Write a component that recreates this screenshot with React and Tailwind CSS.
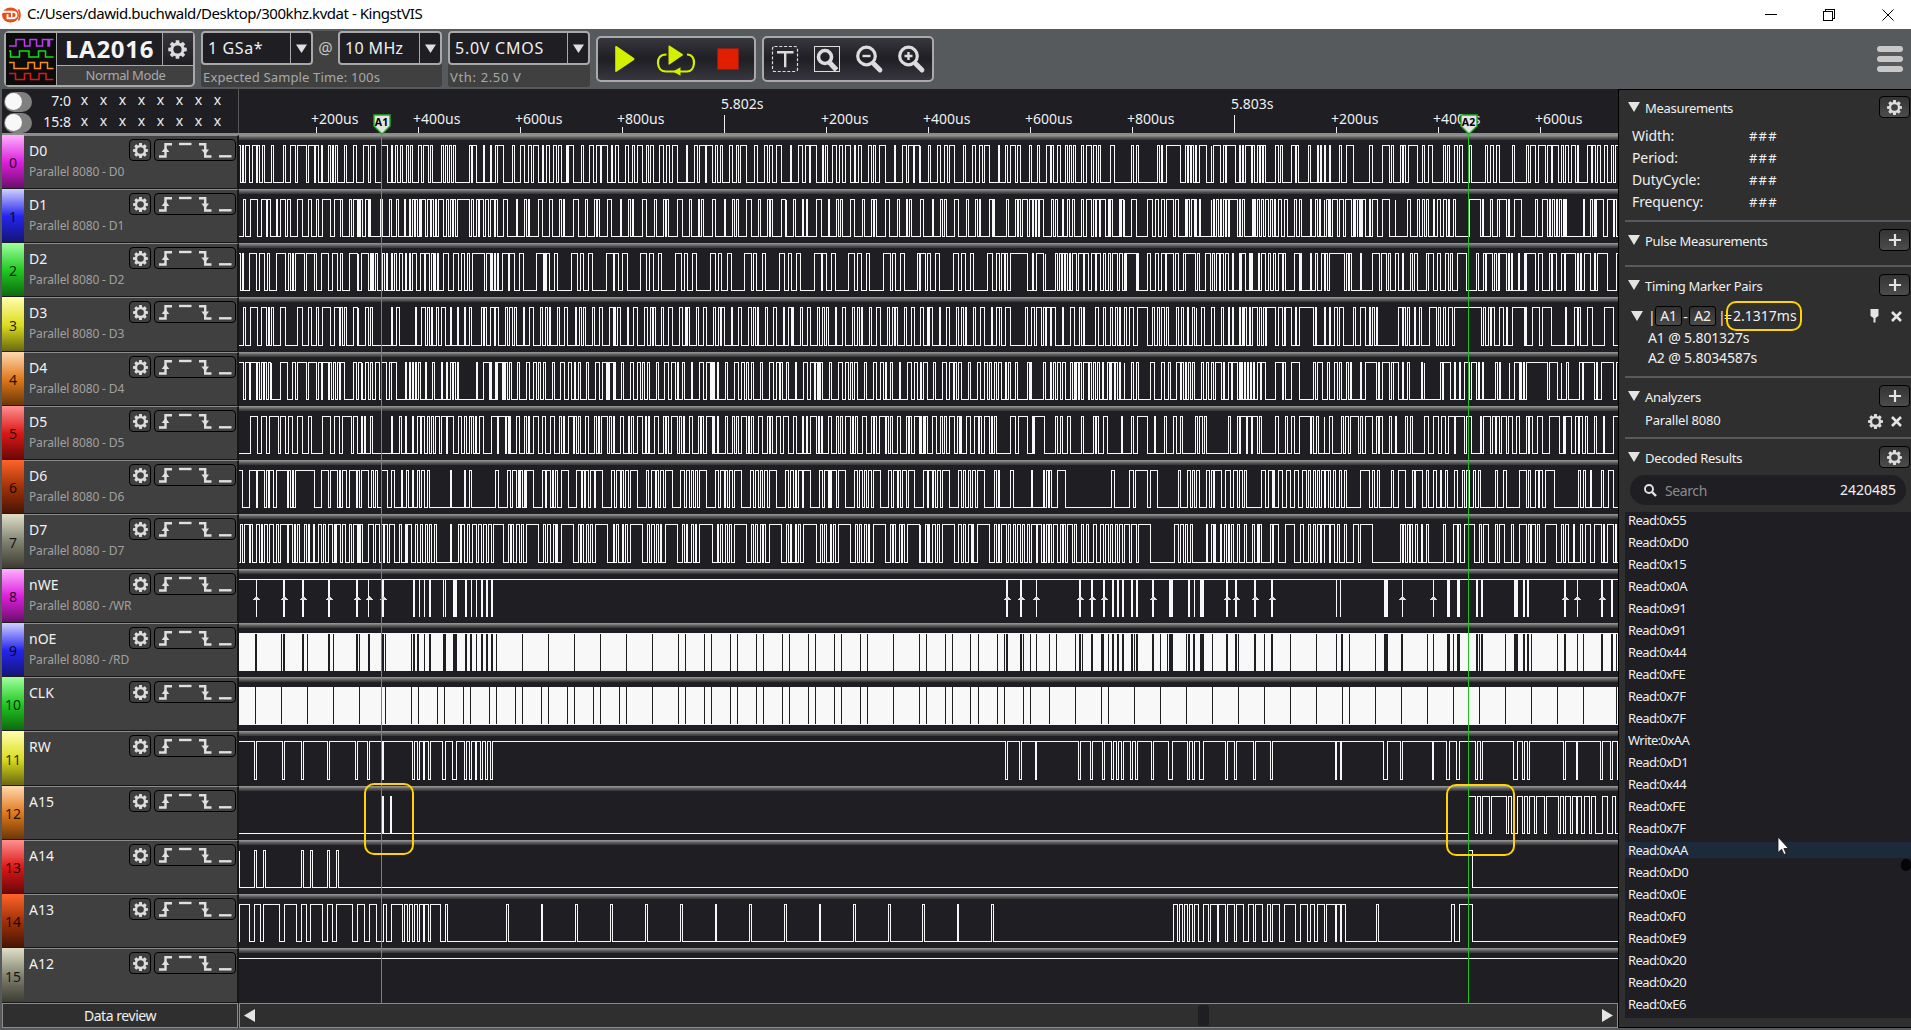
import React from "react";

const WAVE_X = 239;
const WAVE_W = 1379;

/* Edge positions of each captured block: pixel = origin + edge / scale */
const A = { origin: 230, scale: 2.2725 };
const B = { origin: 920, scale: 2.24 };
const C = { origin: 0, scale: 2.45 };
const P = { origin: 0, scale: 1 };

const nums = (s) => s.trim().split(/\s+/).map(Number);
const px = (v, block) => Math.floor(block.origin + v / block.scale - WAVE_X);

const STRIP = [
  "bg-[linear-gradient(180deg,#ffb0ff_0%,#dc1edc_52%,#6a0f6a_100%)]",
  "bg-[linear-gradient(180deg,#d0d0ff_0%,#2424ee_52%,#141478_100%)]",
  "bg-[linear-gradient(180deg,#a0ffa0_0%,#20c820_52%,#0d6a0d_100%)]",
  "bg-[linear-gradient(180deg,#ffffb0_0%,#dcdc1e_52%,#6a6a10_100%)]",
  "bg-[linear-gradient(180deg,#ffd8b0_0%,#e07818_52%,#6a3808_100%)]",
  "bg-[linear-gradient(180deg,#ff9090_0%,#dc1616_52%,#6a0808_100%)]",
  "bg-[linear-gradient(180deg,#ff6428_0%,#a03008_52%,#481604_100%)]",
  "bg-[linear-gradient(180deg,#e0e0c8_0%,#808070_52%,#3c3c30_100%)]",
];

const CHANNELS = [
  { name: "D0", sub: "D0", h: 54, blocks: [
    [A, "20 24 28 31 35 45 51 60 62 68 74 79 94 99 121 126 137 149 153 174 178 191 195 200 207 211 223 228 232 235 239 244 260 265 280 288 303 315 319 331 345 357 367 370 375 381 387 392 401 406 410 415 428 435 439 451 456 460 480 485 490 495 499 503 508 513 544 549 551 560 575 579 591 594 603 607 609 621 642 647 661 669 678 685 689 701 710 713 719 726 736 742 747 754 764 768 769 781 798 803 818 827 834 841 845 857 866 870 875 882 898 905 914 919 925 937 946 950 955 962 976 984 991 998 1005 1017 1037 1040 1055 1062 1068 1080 1082 1097 1103 1108 1114 1119 1134 1142 1150 1155 1161 1173 1193 1198 1214 1222 1227 1232 1241 1253 1273 1276 1292 1300 1307 1317 1319 1333 1346 1349 1353 1357 1370 1378 1386 1391 1398 1410 1419 1422 1429 1434 1450 1457 1462 1466 1477 1489 1510 1513 1528 1537 1543 1553 1556 1567"],
    [B, "0 2 20 24 39 45 55 61 66 77 97 101 117 124 133 140 144 156 176 178 191 195 203 214 219 225 246 250 263 268 283 292 294 299 309 314 325 330 335 339 343 348 361 367 373 384 389 395 399 404 427 435 474 478 484 489 532 537 541 543 552 583 595 599 602 605 609 613 617 620 625 642 652 654 657 674 680 684 686 707 716 719 722 725 728 742 745 749 757 760 763 768 770 775 796 802 808 811 832 840 844 848 870 875 890 893 897 900 906 908 917 920 939 944 956 971 1007 1013 1036 1051 1056 1061 1076 1080 1082 1088 1094 1115 1125 1130 1139 1149 1173 1177 1181 1187 1198 1203 1209 1215 1230 1235 1267 1272 1277 1284 1292 1297 1327 1332 1358 1363 1367 1379 1385 1401 1405 1414 1416 1431 1437 1442 1447 1452 1459 1468 1473 1475 1496 1504 1507 1514 1517 1525 1533 1541 1549 1553 1559 1564"],
  ] },
  { name: "D1", sub: "D1", h: 54, blocks: [
    [A, "31 35 46 63 72 82 86 91 105 109 114 126 131 137 153 165 178 185 196 200 211 228 237 250 251 256 271 275 280 289 291 294 297 302 307 315 318 320 341 346 363 367 378 384 396 399 409 411 415 419 422 427 430 434 436 444 449 456 458 463 468 470 474 485 492 497 501 505 509 513 516 544 549 553 560 564 568 577 580 588 591 600 603 607 621 631 651 653 669 674 679 681 701 711 727 733 749 754 757 760 780 792 808 813 829 832 836 840 858 868 887 890 905 909 914 916 937 947 964 969 985 989 991 997 1017 1028 1044 1049 1065 1068 1072 1076 1096 1104 1124 1126 1142 1147 1152 1156 1173 1185 1202 1206 1221 1226 1229 1232 1253 1262 1264 1265 1280 1286 1300 1304 1309 1312 1332 1344 1360 1362 1378 1383 1387 1391 1410 1420 1437 1442 1458 1463 1465 1469 1489 1498 1516 1521 1537 1540 1545 1549"],
    [B, "0 8 28 30 47 50 55 59 77 86 104 109 125 129 133 136 156 162 165 167 193 198 214 218 220 225 229 241 246 251 254 258 261 265 268 277 294 299 304 309 319 321 330 335 341 346 361 366 372 384 388 393 396 401 404 416 422 425 427 431 447 449 452 455 457 459 474 485 509 520 527 534 541 547 552 568 573 578 595 597 600 603 609 614 618 620 626 628 652 654 657 659 664 668 673 675 680 684 686 692 694 711 716 718 722 726 744 746 749 752 757 760 765 770 775 781 786 790 795 797 803 809 816 824 839 843 850 855 875 877 885 890 894 898 905 907 911 914 918 920 924 935 940 949 954 967 970 974 976 979 981 984 987 989 992 998 1007 1010 1013 1025 1036 1051 1064 1066 1092 1099 1115 1118 1125 1130 1134 1139 1150 1153 1160 1166 1173 1179 1184 1187 1195 1200 1230 1256 1261 1262 1278 1283 1293 1297 1299 1314 1319 1321 1331 1347 1378 1383 1394 1405 1409 1413 1416 1422 1425 1429 1433 1438 1441 1443 1447 1448 1487 1489 1501 1506 1510 1513 1516 1532 1541 1553 1556 1561"],
  ] },
  { name: "D2", sub: "D2", h: 54, blocks: [
    [A, "20 24 28 31 44 60 67 79 86 90 105 126 132 137 141 145 148 169 174 192 193 196 208 224 233 244 250 256 271 289 291 293 298 315 319 321 323 327 331 336 346 351 356 358 366 370 374 379 385 393 398 402 409 411 415 424 433 442 445 453 458 462 465 468 471 474 485 497 508 519 527 533 540 544 551 578 583 591 594 597 600 603 607 611 619 634 636 646 658 667 697 712 715 717 719 726 738 744 776 789 796 803 815 824 855 871 874 882 893 903 933 946 953 962 974 981 1012 1027 1033 1040 1051 1060 1092 1104 1110 1118 1130 1140 1169 1184 1190 1197 1210 1217 1249 1261 1269 1276 1287 1297 1328 1344 1347 1356 1367 1376 1405 1420 1426 1434 1446 1453 1485 1501 1505 1512 1524 1533 1563 1567"],
    [B, "0 12 17 24 35 44 76 86 94 102 113 120 151 162 171 178 183 190 192 197 203 241 251 255 262 277 282 282 303 308 313 317 320 323 326 330 334 338 341 351 356 366 368 377 384 393 396 404 411 416 422 427 431 443 447 453 458 461 462 484 488 489 509 516 527 534 540 549 552 568 572 578 590 594 595 617 621 626 640 651 656 660 665 670 674 679 685 690 699 702 716 718 721 729 738 740 743 745 758 761 765 775 781 786 791 797 803 811 815 818 839 849 852 855 875 878 886 890 900 905 909 913 917 950 955 960 962 967 986 988 1013 1029 1034 1045 1049 1055 1065 1071 1081 1083 1099 1104 1108 1115 1135 1138 1140 1151 1160 1167 1177 1183 1188 1193 1203 1224 1246 1250 1262 1267 1268 1282 1286 1292 1295 1297 1299 1314 1319 1321 1325 1327 1341 1343 1353 1356 1358 1379 1385 1394 1410 1414 1416 1425 1437 1443 1447 1468 1473 1475 1479 1482 1488 1501 1510 1514 1517 1541 1561 1564"],
  ] },
  { name: "D3", sub: "D3", h: 55, blocks: [
    [A, "31 35 46 63 71 82 87 90 94 99 115 126 153 165 178 185 196 200 211 228 237 249 252 256 260 265 280 289 291 293 307 315 319 324 366 369 378 385 421 423 436 444 449 453 458 460 469 474 480 489 501 503 517 519 533 536 544 549 571 575 578 582 591 600 603 610 625 631 635 642 646 652 667 670 681 690 705 710 717 721 725 728 744 749 760 768 785 788 795 798 803 808 824 829 839 847 862 871 874 876 881 887 903 906 917 925 941 949 955 960 962 966 980 986 996 1005 1021 1028 1034 1037 1039 1044 1060 1065 1076 1083 1098 1103 1110 1114 1118 1124 1139 1143 1155 1163 1178 1185 1189 1194 1198 1202 1216 1222 1234 1243 1257 1260 1270 1276 1278 1281 1296 1301 1312 1319 1334 1340 1346 1350 1355 1360 1375 1378 1391 1399 1414 1420 1426 1430 1434 1437 1453 1458 1469 1478 1494 1498 1505 1509 1512 1516 1532 1538 1549 1556"],
    [B, "2 7 16 18 22 27 44 46 59 66 82 87 92 97 101 104 120 124 135 145 160 162 171 177 179 182 192 203 236 240 250 257 262 272 277 282 283 292 294 303 319 321 337 346 357 362 367 369 393 399 411 416 427 431 437 443 447 449 458 462 470 478 488 509 520 525 532 537 541 547 552 557 574 578 586 590 599 602 610 615 619 620 630 637 653 659 675 680 690 694 699 703 715 718 722 724 727 732 737 740 744 757 760 765 770 775 776 796 803 812 816 818 819 832 840 844 850 882 886 888 905 909 917 920 928 935 939 949 971 976 987 998 1007 1010 1014 1018 1022 1025 1072 1080 1082 1087 1093 1097 1108 1110 1119 1123 1141 1157 1161 1167 1173 1177 1184 1192 1197 1258 1262 1267 1273 1277 1281 1286 1298 1308 1314 1316 1327 1353 1356 1358 1372 1388 1394 1414 1447 1448 1467 1473 1475 1480 1495 1507 1533 1553"],
  ] },
  { name: "D4", sub: "D4", h: 54, blocks: [
    [A, "20 31 35 44 47 60 62 67 71 76 79 83 87 91 94 95 115 131 142 149 153 174 178 196 200 208 211 224 227 231 235 240 244 248 250 260 280 288 291 298 300 301 307 315 319 323 331 340 344 344 345 356 363 366 367 379 398 400 409 411 415 418 421 424 428 432 444 446 460 465 480 482 491 495 500 505 509 513 517 519 560 563 577 589 592 594 603 606 609 619 621 623 626 631 635 639 653 658 674 681 689 696 701 705 713 717 733 738 752 760 769 776 782 785 791 796 811 815 831 840 847 855 858 860 863 871 874 876 890 894 910 917 926 933 937 942 949 953 969 974 988 997 1004 1012 1016 1019 1029 1033 1048 1051 1067 1076 1083 1092 1094 1097 1099 1101 1107 1111 1126 1130 1146 1155 1163 1169 1173 1178 1185 1189 1205 1210 1226 1234 1241 1248 1252 1256 1265 1269 1284 1287 1303 1312 1319 1328 1331 1335 1337 1340 1343 1347 1363 1367 1383 1391 1399 1405 1409 1414 1420 1426 1442 1446 1462 1469 1478 1485 1489 1493 1501 1505 1521 1524 1540 1549 1555 1563"],
    [B, "0 3 8 17 30 35 51 59 66 75 77 82 87 93 109 113 128 136 145 151 156 160 167 171 176 182 191 194 198 203 213 219 241 245 247 250 277 280 292 295 299 303 309 315 319 325 337 341 346 349 351 355 357 361 366 377 380 384 389 394 398 403 408 411 421 424 425 426 428 436 438 443 446 448 457 459 474 479 484 489 516 525 541 548 557 562 574 583 586 590 594 597 601 605 610 615 631 636 642 646 652 657 663 675 679 683 690 698 700 711 715 718 721 723 727 730 734 736 740 743 747 749 757 762 764 775 796 811 815 818 832 849 881 886 891 901 912 917 928 935 940 945 955 960 964 967 986 988 998 1022 1026 1030 1036 1051 1056 1060 1061 1072 1081 1083 1092 1096 1124 1126 1130 1131 1167 1170 1173 1188 1197 1200 1208 1211 1219 1230 1235 1246 1250 1254 1261 1262 1289 1293 1298 1301 1320 1321 1331 1342 1345 1348 1351 1355 1358 1405 1410 1427 1437 1438 1448 1453 1478 1483 1486 1511 1515 1518 1526 1553 1560 1564"],
  ] },
  { name: "D5", sub: "D5", h: 54, blocks: [
    [A, "46 62 71 83 90 110 115 126 132 142 153 165 178 185 211 228 237 249 256 276 280 289 298 302 305 309 319 324 366 369 385 390 398 401 415 417 426 432 436 442 449 453 458 463 466 476 480 492 495 508 519 527 533 537 544 548 549 553 558 560 568 576 594 607 610 626 628 632 635 637 651 658 670 674 679 681 689 701 710 717 728 738 749 754 757 760 769 781 784 788 792 796 808 815 829 832 838 840 845 858 863 866 871 874 887 894 905 908 913 917 925 938 944 946 950 953 965 974 985 989 991 996 1004 1016 1021 1026 1030 1033 1044 1051 1065 1069 1072 1075 1083 1096 1098 1101 1107 1110 1126 1130 1143 1147 1152 1155 1162 1174 1178 1181 1186 1189 1202 1210 1222 1226 1229 1232 1241 1252 1257 1269 1280 1287 1301 1304 1309 1312 1319 1333 1337 1340 1344 1347 1360 1367 1378 1383 1387 1391 1398 1410 1414 1417 1422 1426 1438 1446 1458 1462 1465 1469 1477 1489 1493 1497 1501 1505 1516 1524 1537 1541 1545 1549 1556 1567"],
    [B, "0 3 7 10 13 17 28 36 45 50 55 59 66 77 84 88 90 93 104 113 123 130 133 137 144 156 160 163 167 171 203 214 220 241 251 255 256 279 303 308 315 320 330 337 361 366 389 393 395 400 411 419 451 453 474 479 488 509 525 527 547 552 568 575 583 587 617 621 627 632 638 642 691 696 711 716 719 731 734 742 745 757 760 765 796 803 818 823 832 839 850 875 877 882 889 893 905 907 917 923 944 949 954 959 965 983 987 991 998 1013 1022 1026 1030 1036 1051 1056 1065 1067 1088 1092 1099 1103 1131 1139 1151 1161 1168 1176 1183 1197 1199 1219 1224 1235 1256 1258 1262 1278 1282 1288 1292 1298 1302 1314 1319 1327 1336 1342 1358 1362 1366 1371 1383 1395 1410 1433 1441 1443 1447 1459 1468 1474 1477 1483 1490 1495 1510 1515 1531 1533 1553 1564"],
  ] },
  { name: "D6", sub: "D6", h: 54, blocks: [
    [A, "20 28 44 60 63 78 83 87 90 99 105 131 133 137 141 145 149 191 208 224 228 244 249 252 256 265 271 287 290 295 298 315 322 325 331 335 345 358 367 374 389 393 401 406 415 418 426 431 436 442 449 453 501 503 533 536 544 549 603 610 630 637 641 652 656 658 661 665 669 672 674 690 710 716 720 728 733 736 740 745 753 769 787 798 800 805 808 815 819 828 830 847 867 873 878 888 890 894 899 905 909 926 946 952 957 966 970 974 979 985 990 1005 1024 1033 1037 1045 1048 1053 1057 1063 1066 1083 1104 1110 1114 1123 1126 1130 1136 1143 1147 1163 1182 1189 1194 1202 1205 1210 1214 1222 1226 1241 1263 1269 1273 1281 1284 1288 1293 1300 1303 1319 1340 1346 1350 1359 1362 1364 1368 1378 1383 1399 1419 1426 1430 1437 1442 1446 1450 1458 1462 1478 1496 1504 1508 1516 1520 1523 1528 1537 1541 1556"],
    [B, "8 17 19 28 30 35 39 45 50 66 86 92 97 103 109 113 117 124 129 145 167 171 176 178 203 210 250 252 277 279 283 287 291 295 308 326 430 435 469 478 483 509 516 532 579 583 599 606 610 615 620 626 642 648 652 658 660 675 684 696 702 711 716 722 727 731 765 775 781 789 791 795 803 811 822 831 839 848 857 865 870 875 881 886 890 894 899 905 909 914 916 920 926 931 939 944 951 955 986 1007 1013 1018 1025 1029 1056 1061 1072 1088 1103 1108 1110 1125 1135 1139 1151 1156 1166 1168 1176 1182 1198 1203 1215 1219 1224 1231 1240 1245 1250 1256 1288 1293 1308 1314 1342 1358 1363 1367 1379 1386 1388 1394 1401 1421 1475 1479 1487 1491 1501 1505 1526 1532 1542 1553"],
  ] },
  { name: "D7", sub: "D7", h: 55, blocks: [
    [A, "24 28 34 44 46 51 60 67 71 74 78 86 90 99 105 110 115 131 133 142 146 149 153 158 169 174 179 181 190 193 200 208 212 216 223 233 237 239 243 250 256 263 271 275 280 289 291 294 297 302 315 325 330 340 345 348 352 358 362 374 385 389 398 401 404 413 422 427 433 438 444 449 453 458 465 469 501 503 519 524 527 533 540 544 551 560 564 572 576 582 587 594 599 621 634 637 640 645 652 658 662 667 674 701 712 717 722 728 736 739 742 744 753 780 792 796 798 803 811 815 819 824 831 858 871 874 878 882 891 895 899 903 910 937 949 953 958 964 970 974 978 981 990 1017 1028 1033 1037 1040 1049 1053 1058 1060 1067 1096 1107 1110 1115 1119 1127 1131 1135 1139 1146 1174 1185 1189 1194 1198 1206 1210 1213 1217 1226 1253 1264 1269 1273 1277 1284 1288 1292 1296 1303 1332 1343 1347 1351 1356 1364 1367 1371 1375 1383 1410 1421 1425 1430 1434 1441 1446 1450 1453 1462 1489 1501 1505 1508 1512 1521 1525 1529 1533 1540 1567"],
    [B, "0 2 12 17 18 22 29 34 39 43 50 77 87 92 97 101 109 115 117 119 129 156 167 171 176 178 182 193 198 203 209 214 219 224 229 235 241 246 250 261 263 272 277 279 283 287 291 295 298 308 315 320 322 325 330 341 346 350 362 367 373 377 388 395 404 411 416 422 427 431 437 443 447 453 458 469 474 484 489 516 570 578 583 590 595 599 606 611 642 644 652 657 660 663 673 675 681 686 691 694 698 702 711 715 727 731 744 750 757 759 761 765 785 789 791 802 819 839 853 859 870 875 881 885 890 896 900 905 907 917 920 928 935 940 950 955 971 982 987 1013 1076 1080 1082 1087 1092 1096 1099 1103 1110 1114 1123 1125 1134 1138 1173 1177 1196 1203 1207 1211 1219 1242 1254 1258 1262 1274 1289 1293 1297 1309 1325 1330 1342 1358 1362 1367 1370 1379 1383 1388 1400 1426 1437 1441 1447 1452 1463 1467 1479 1485 1490 1501 1511 1527 1531 1533 1541 1553 1557 1560"],
  ] },
  { name: "nWE", sub: "/WR", h: 54, kind: "strobe",
    /* x width pairs */
    blocks: [
      [C, "628 1 695 2 742 2 806 2 875 2 904 1 938 2 1014 2 1028 1 1040 1 1053 2 1087 1 1092 1 1115 4 1141 2 1155 1 1167 1 1180 2 1193 2 1205 2"],
      [B, "195 2 226 2 261 1 359 2 386 2 412 2 433 2 444 2 454 2 475 2 486 2 522 2 562 4 602 2 615 1 631 4 687 2 708 2 750 2 789 2 933 1 943 1 1043 4 1081 1 1150 1 1183 3 1206 3 1247 2 1259 2 1335 4 1353 2 1363 2 1445 2 1473 1 1528 2 1550 2"],
    ],
    arrows: [
      [C, "628 697 743 807 875 906 940"],
      [B, "196 227 261 360 386 413 523 689 708 751 789 1081 1150 1446 1473 1528"],
    ] },
  { name: "nOE", sub: "/RD", h: 54, kind: "dense", top: 11, bottom: 48,
    blocks: [
      [C, "627 2 689 1 695 2 742 2 753 1 806 2 817 1 874 2 881 1 904 2 939 2 944 1 1008 1 1014 2 1025 2 1040 1 1053 2 1089 3 1115 4 1141 2 1153 2 1167 1 1180 2 1192 2 1205 2 1216 1 1280 1 1344 1 1407 1"],
      [P, "600 1 626 1 652 1 678 1 685 1 704 1 711 1 730 1 737 1 756 1 763 1 782 1 789 1 808 1 815 1 834 1 841 1 860 1 867 1 893 1 919 1"],
      [B, "14 1 56 1 72 1 114 1 130 1 173 1 189 1 195 2 226 2 231 1 247 1 261 1 290 1 306 1 348 1 358 2 364 1 385 2 406 1 411 2 422 1 433 2 444 2 454 2 475 2 480 1 486 2 522 2 539 1 555 1 562 4 597 1 602 2 614 2 631 4 655 1 687 2 708 2 713 1 750 2 772 1 789 2 830 1 888 1 933 1 946 2 962 1 1020 1 1043 4 1079 2 1137 1 1150 1 1183 3 1195 1 1206 3 1247 2 1253 1 1259 2 1311 1 1335 4 1353 2 1363 2 1370 1 1428 1 1445 2 1473 1 1486 1 1527 2 1549 2 1560 1"],
    ] },
  { name: "CLK", h: 54, kind: "dense", top: 10, bottom: 47,
    blocks: [
      [C, "626 1 689 1 753 1 817 1 881 1 944 1 1008 1 1025 1 1072 1 1089 1 1135 1 1153 1 1199 1 1216 1 1263 1 1280 1 1327 1 1344 1 1390 1 1407 1 1454 1"],
      [P, "600 1 619 1 626 1 652 1 678 1 685 1 704 1 711 1 730 1 737 1 756 1 763 1 782 1 789 1 808 1 815 1 834 1 841 1 860 1 867 1 893 1 919 1"],
      [B, "14 1 56 1 72 1 114 1 130 1 173 1 189 1 231 1 247 1 290 1 348 1 406 1 422 1 480 1 539 1 597 1 655 1 713 1 772 1 830 1 888 1 946 1 962 1 1020 1 1078 1 1137 1 1195 1 1253 1 1311 1 1370 1 1428 1 1486 1 1560 1"],
    ] },
  { name: "RW", h: 55, idleHigh: true, blocks: [
    [C, "624 628 692 697 739 744 803 807 871 876 901 905 936 940 1011 1015 1023 1028 1037 1040 1050 1055 1085 1091 1108 1119 1138 1143 1150 1155 1164 1168 1177 1182 1189 1194 1202 1207"],
    [B, "191 196 223 227 259 261 356 360 382 387 409 413 430 434 440 445 451 456 471 476 483 487 518 522 557 566 600 604 610 614 626 635 684 689 704 709 748 752 785 790 931 933 942 944 1038 1047 1076 1081 1148 1150 1179 1186 1202 1209 1244 1249 1256 1260 1330 1338 1349 1353 1361 1365 1441 1446 1470 1473 1524 1529 1547 1551 1562 1564"],
  ] },
  { name: "A15", h: 54, blocks: [
    [C, "936 940 956 959"],
    [B, "1229 1244 1249 1255 1260 1276 1280 1314 1318 1325 1338 1350 1353 1361 1365 1376 1381 1399 1403 1430 1435 1441 1446 1457 1461 1470 1473 1482 1488 1500 1504 1513 1529 1540 1551 1558"],
  ] },
  { name: "A14", h: 54, blocks: [
    [C, "586 588 624 628 645 650 739 744 760 766 803 807 824 830"],
    [B, "1229 1238"],
  ] },
  { name: "A13", h: 54, blocks: [
    [C, "586 611 624 638 645 685 697 726 739 751 760 790 803 814 824 863 876 893 905 922 940 947 959 986 991 998 1003 1010 1015 1023 1028 1037 1040 1050 1055 1079 1091 1097 1241 1246 1326 1329 1410 1415 1495 1501"],
    [P, "645 647 680 682 715 716 749 751 784 786 819 820 853 855 888 890"],
    [B, "5 10 84 86 160 165 568 577 581 588 592 599 603 610 614 624 635 646 651 666 669 684 689 704 709 725 736 747 752 767 779 785 790 805 816 841 852 868 875 884 890 907 910 931 933 942 944 953 1022 1027 1190 1197 1208 1238"],
  ] },
  { name: "A12", h: 55, idleHigh: true, blocks: [] },
];

function levelPath(ch) {
  const hi = 10.5;
  const lo = ch.h - 6.5;
  const base = ch.idleHigh ? hi : lo;
  const peak = ch.idleHigh ? lo : hi;
  let d = `M0 ${base}`;
  ch.blocks.forEach(([block, s]) => {
    const e = nums(s);
    for (let i = 0; i < e.length; i += 2) {
      const a = px(e[i], block) + 0.5;
      const b = px(e[i + 1], block) + 0.5;
      d += `H${a}V${peak}H${b}V${base}`;
    }
  });
  return d + `H${WAVE_W}`;
}

function bars(blocks) {
  const out = [];
  blocks.forEach(([block, s]) => {
    const e = nums(s);
    for (let i = 0; i < e.length; i += 2) {
      const w = e[i + 1];
      out.push([Math.round(block.origin + e[i] / block.scale - WAVE_X - (block === P ? 0 : w / 2)), w]);
    }
  });
  return out;
}

function Wave({ ch }) {
  return (
    <svg width={WAVE_W} height={ch.h} className="block" shapeRendering="crispEdges">
      {ch.kind === "dense" && (
        <>
          <rect x="0" y="10" width={WAVE_W} height="38" fill="#f8f8f8" />
          {bars(ch.blocks).map(([x, w], i) => (
            <rect key={i} x={x} y={ch.top} width={w} height={ch.bottom - ch.top} fill="#1f1e23" />
          ))}
        </>
      )}
      {ch.kind === "strobe" && (
        <>
          <rect x="0" y="10" width={WAVE_W} height="1" fill="#f8f8f8" />
          {bars(ch.blocks).map(([x, w], i) => (
            <rect key={i} x={x} y="10" width={w} height="38" fill="#f8f8f8" />
          ))}
          {ch.arrows.flatMap(([block, s]) =>
            nums(s).map((v) => {
              const x = px(v, block) + 0.5;
              return <path key={x} d={`M${x} 27l3.5 4h-7z`} fill="#e0e0e0" />;
            })
          )}
        </>
      )}
      {!ch.kind && <path d={levelPath(ch)} fill="none" stroke="#f8f8f8" />}
    </svg>
  );
}

function Gear({ className, hole = "#3f3f3f" }) {
  return (
    <svg viewBox="0 0 20 20" className={className} fill="#dcdcdc">
      {[0, 45, 90, 135, 180, 225, 270, 315].map((a) => (
        <path key={a} d="M8.4 1.2h3.2l.5 4h-4.2z" transform={`rotate(${a} 10 10)`} />
      ))}
      <circle cx="10" cy="10" r="6.6" />
      <circle cx="10" cy="10" r="3.9" fill={hole} />
    </svg>
  );
}

function EdgeIcons() {
  return (
    <svg width="80" height="20" viewBox="155 140 80 20" className="block" fill="none" stroke="#e0e0e0" strokeWidth="2.4">
      <path d="M159 156.500h6.500v-12.300h6.500" />
      <path d="M165.500 147l3.800 5h-7.600z" fill="#e0e0e0" stroke="none" />
      <path d="M179 144h12.500" />
      <path d="M199 144.200h6.200v12.300h6.300" />
      <path d="M205.200 154.500l3.800-5h-7.600z" fill="#e0e0e0" stroke="none" />
      <path d="M219 156.300h12.500" />
    </svg>
  );
}

function ChannelRow({ ch, index }) {
  return (
    <div className={"flex " + (ch.h === 55 ? "h-[55px]" : "h-[54px]")}>
      <div className={"flex w-[22px] shrink-0 items-center justify-center border-b border-[#1c1c1e] pt-[2px] text-[14px] text-black/85 " + STRIP[index % 8]}>
        {index}
      </div>
      <div className="flex w-[215px] shrink-0 justify-between border-t border-r-2 border-b border-t-[#8c8c8c] border-r-[#161616] border-b-[#161616] bg-[#404040] pl-[5px] pr-px">
        <div className="flex flex-col pt-[5px]">
          <span className="h-5 text-[14px] leading-5 text-[#f2f2f2]">{ch.name}</span>
          {ch.sub && <span className="mt-[3px] text-[12px] leading-4 tracking-[-0.15px] whitespace-nowrap text-[#a0a0a0]">Parallel 8080 - {ch.sub}</span>}
        </div>
        <div className="absolute ml-[100px] mt-[3px] flex gap-[3px]">
          <div className="flex h-[22px] w-[22px] items-center justify-center rounded-[4px] border border-black">
            <Gear className="h-[17px] w-[17px]" />
          </div>
          <div className="flex h-[22px] w-[82px] items-center rounded-[4px] border border-black">
            <EdgeIcons />
          </div>
        </div>
      </div>
      <div className="grow bg-[#1f1e23] bg-[linear-gradient(180deg,#979797_0,#8a8a8a_1px,#6c6c6c_2px,#555_3px,#333336_5px,#1f1e23_5px)]">
        <Wave ch={ch} />
      </div>
    </div>
  );
}

function Combo({ text, box, inner, track }) {
  return (
    <div className={"flex h-[34px] rounded-[4px] border-2 border-[#a9a9a9] bg-[#1f1e23] " + box}>
      <span className={"grow pl-[5px] text-[16px] leading-[31px] whitespace-nowrap text-[#f0f0f0] " + track}>{text}</span>
      <div className={"flex items-center justify-center border-l border-[#a9a9a9] " + inner}>
        <svg width="11" height="9" className="block"><path d="M0 .5h11l-5.500 8.500z" fill="#e0e0e0" /></svg>
      </div>
    </div>
  );
}

function Toolbar() {
  return (
    <div className="flex h-[60px] items-start bg-[#575a5d] pt-[2px] pl-1">
      <div className="flex h-[56px] w-[191px] rounded-[5px] border-2 border-[#a9a9a9] bg-[#404040]">
        <svg width="50" height="52" viewBox="6 33 50 52" className="block shrink-0 bg-[#0c0c0c]" fill="none" strokeWidth="1.500">
          <path stroke="#b83cf0" d="M9 46h7v-6.500h8.500v6.500h5.500v-6.500h6.500v6.500h6v-6.500h5.500v6.500h1.500v-6.500h4" />
          <path stroke="#14dc14" d="M9 51h1.500v6h9v-6h9.500v6h9.500v-6h7v6h8" />
          <path stroke="#ff8c14" d="M9 62.500h5v6h14v-6h6.500v6h6v-6h7v6h6" />
          <path stroke="#e61414" d="M9 73.500h6.500v6h9v-6h6v6h8.500v-6h7v6h7.500" />
        </svg>
        <div className="flex grow flex-col border-l border-[#a9a9a9]">
          <div className="flex h-[33px] border-b border-[#a9a9a9] bg-[#1f1e23]">
            <span className="w-[105px] pl-2 text-[24px] leading-[31px] font-bold tracking-[0.7px] text-[#f4f4f4]">LA2016</span>
            <div className="flex grow items-center justify-center border-l border-[#a9a9a9] bg-linear-to-b from-[#37363d] to-[#1f1e23] pr-px">
              <Gear className="h-[21px] w-[21px]" hole="#28272c" />
            </div>
          </div>
          <span className="pl-px text-center text-[13px] leading-[19px] tracking-[-0.4px] text-[#a8a8a8]">Normal Mode</span>
        </div>
      </div>
      <div className="ml-[6px] flex h-[56px] w-[241px] flex-col rounded-[3px] bg-[#404040]">
        <div className="flex items-center">
          <Combo text="1 GSa*" box="w-[112px]" inner="w-[21px]" track="tracking-[0.6px]" />
          <span className="w-[25px] text-center text-[16px] leading-[30px] text-[#c4c4c4]">@</span>
          <Combo text="10 MHz" box="w-[104px]" inner="w-[21px]" track="tracking-[0.35px]" />
        </div>
        <span className="pl-[2px] text-[13px] leading-[24px] tracking-[0.15px] whitespace-nowrap text-[#a8a8a8]">Expected Sample Time: 100s</span>
      </div>
      <div className="ml-[6px] flex h-[56px] w-[142px] flex-col rounded-[3px] bg-[#404040]">
        <Combo text="5.0V CMOS" box="w-[142px]" inner="w-[21px]" track="tracking-[0.75px]" />
        <span className="pl-[2px] text-[13px] leading-[24px] tracking-[0.65px] whitespace-nowrap text-[#a8a8a8]">Vth: 2.50 V</span>
      </div>
      <div className="mt-[5px] ml-[6px] h-[46px] w-[160px] rounded-[5px] border-2 border-[#a9a9a9] bg-linear-to-b from-[#38373f] via-[#1f1e23] to-[#38373f]">
        <svg width="156" height="42" viewBox="598 38 156 42" className="block">
          <path d="M615.200 47v24q0 1.500 1.300.8l17.500-11.700q1.200-1 0-2l-17.500-12q-1.300-.6-1.300.9z" fill="#d2f000" />
          <path d="M668.500 46.500v17.500q0 1.200 1 .6l13-9q1-.8 0-1.600l-13-8.500q-1-.4-1 1z" fill="#d2f000" />
          <path d="M666.500 54.500c-7 0-9 4.500-8.500 9 .5 5 3.500 8 8 8h21c4.500 0 6.500-3.500 7-8 .4-5-2-9-7-9" fill="none" stroke="#d2f000" strokeWidth="2.200" />
          <path d="M673 71.500l7.500-4.200v8.400z" fill="#d2f000" />
          <rect x="717.500" y="48.500" width="21" height="21" fill="#e01e00" stroke="#8c1e14" strokeWidth=".8" />
        </svg>
      </div>
      <div className="mt-[5px] ml-[6px] h-[46px] w-[172px] rounded-[5px] border-2 border-[#a9a9a9] bg-linear-to-b from-[#38373f] via-[#1f1e23] to-[#38373f]">
        <svg width="168" height="42" viewBox="764 38 168 42" className="block" fill="none" stroke="#dcdcdc">
          <rect x="772.500" y="46.500" width="25" height="25" rx="2" strokeDasharray="3 1.800" strokeWidth="1.200" />
          <path d="M777 52.300h16.500M785.200 52.300v15" strokeWidth="2.400" />
          <rect x="814.500" y="46.500" width="25" height="25" strokeWidth="1" />
          <circle cx="825" cy="57" r="6.500" strokeWidth="3.600" />
          <path d="M829.500 62.500l7 7.500" strokeWidth="5" />
          <circle cx="866.500" cy="56" r="8.800" strokeWidth="3.200" />
          <path d="M862.500 56h8" strokeWidth="2.400" />
          <path d="M873.500 63.500l6.500 6.500" strokeWidth="4.800" strokeLinecap="round" />
          <circle cx="908.500" cy="56" r="8.800" strokeWidth="3.200" />
          <path d="M904.500 56h8M908.500 52v8" strokeWidth="2.400" />
          <path d="M915.500 63.500l6.500 6.500" strokeWidth="4.800" strokeLinecap="round" />
        </svg>
      </div>
      <div className="mt-[15px] mr-2 ml-auto flex w-[26px] flex-col gap-1">
        <div className="h-[6px] rounded-full bg-[#c8c8c8]" />
        <div className="h-[6px] rounded-full bg-[#c8c8c8]" />
        <div className="h-[6px] rounded-full bg-[#c8c8c8]" />
      </div>
    </div>
  );
}

const TICKS = [
  [316, "+200us"], [418, "+400us"], [520, "+600us"], [622, "+800us"], [724, "5.802s", true],
  [826, "+200us"], [928, "+400us"], [1030, "+600us"], [1132, "+800us"], [1234, "5.803s", true],
  [1336, "+200us"], [1438, "+400us"], [1540, "+600us"],
];

function BitRow({ label }) {
  return (
    <div className="flex h-[21px] items-center">
      <div className="flex h-5 w-[28px] items-center rounded-full bg-[#808080] pl-px">
        <div className="h-[17px] w-[17px] rounded-full bg-[#f8f8f8]" />
      </div>
      <span className="mb-px w-[39px] text-right text-[14px] leading-5 text-[#f0f0f0]">{label}</span>
      <div className="ml-[4px] flex text-[14px] leading-[18px] text-[#f0f0f0]">
        {Array.from({ length: 8 }, (_, i) => (
          <span key={i} className="mb-[3px] w-[19px] text-center">x</span>
        ))}
      </div>
    </div>
  );
}

function Flag({ x, label }) {
  return (
    <div className="absolute top-[25px] w-[18px] -translate-x-1/2" style={{ left: x - 1.5 }}>
      <svg width="18" height="20" className="block">
        <path d="M1 1h16v11l-8 8-8-8z" fill="#e4e4e4" stroke="#20b020" strokeWidth="1.400" />
      </svg>
      <span className="absolute inset-x-0 top-[2px] text-center text-[10.500px] leading-[12px] font-bold text-black">{label}</span>
      <div className="mx-auto h-[870px] w-px bg-[#20c020]" />
    </div>
  );
}

function Analyzer() {
  return (
    <div className="relative flex w-[1616px] shrink-0 flex-col">
      <div className="flex h-[46px] border-b-2 border-[#8c8c8c] bg-[#1f1e23]">
        <div className="flex w-[237px] shrink-0 flex-col border-r border-[#555] pt-[2px] pl-[2px]">
          <BitRow label="7:0" />
          <BitRow label="15:8" />
        </div>
        <div className="relative grow overflow-hidden">
          {TICKS.map(([x, label, major]) => (
            <React.Fragment key={x}>
              <span
                className={"absolute text-[14px] leading-4 whitespace-nowrap text-[#f0f0f0] " + (major ? "top-[7px]" : "top-[22px]")}
                style={{ left: x - WAVE_X - (major ? 3 : 5) }}
              >
                {label}
              </span>
              <div className={"absolute bottom-0 w-px bg-[#f0f0f0] " + (major ? "h-[18px]" : "h-[6px]")} style={{ left: x - WAVE_X }} />
            </React.Fragment>
          ))}
        </div>
      </div>
      {CHANNELS.map((ch, i) => (
        <ChannelRow key={ch.name} ch={ch} index={i} />
      ))}
      <div className="flex h-[25px] bg-[#2f2f2f]">
        <div className="w-[236px] border border-[#8a8a8a] text-center text-[14px] leading-[23px] tracking-[-0.45px] text-[#f0f0f0]">Data review</div>
        <div className="ml-px flex grow items-center border border-[#8a8a8a] pr-[4px] pl-1">
          <svg width="11" height="13" className="block"><path d="M11 0v13l-11-6.500z" fill="#e4e4e4" /></svg>
          <div className="ml-[943px] h-[21px] w-[11px] rounded-[3px] bg-[#1f1e23]" />
          <svg width="11" height="13" className="ml-auto block"><path d="M0 0v13l11-6.500z" fill="#e4e4e4" /></svg>
        </div>
      </div>
      <Flag x={381} label="A1" />
      <Flag x={1468} label="A2" />
      <div className="absolute top-[694px] left-[362px] h-[72px] w-[50px] rounded-[10px] border-2 border-[#ffd400]" />
      <div className="absolute top-[695px] left-[1444px] h-[72px] w-[69px] rounded-[10px] border-2 border-[#ffd400]" />
    </div>
  );
}

function SmallButton({ children }) {
  return (
    <div className="mr-px flex h-[22px] w-[31px] items-center justify-center rounded-[4px] border border-black bg-linear-to-b from-[#343434] to-[#4c4c4c]">
      {children}
    </div>
  );
}

const Plus = () => (
  <svg width="14" height="14" className="block"><path d="M7 1v12M1 7h12" stroke="#e4e4e4" strokeWidth="2.200" /></svg>
);

const Tri = () => (
  <svg width="12" height="10" className="block"><path d="M0 0h12l-6 10z" fill="#e4e4e4" /></svg>
);

const Cross = () => (
  <svg width="11" height="11" className="block"><path d="M1 1l9 9M10 1l-9 9" stroke="#e4e4e4" strokeWidth="2.600" /></svg>
);

function Head({ title, children }) {
  return (
    <div className="flex h-[22px] items-center pl-[3px]">
      <Tri />
      <span className="mt-[2px] ml-[5px] grow text-[13px] leading-5 tracking-[-0.3px] text-[#f0f0f0]">{title}</span>
      <SmallButton>{children}</SmallButton>
    </div>
  );
}

const RESULTS = [
  "Read:0x55", "Read:0xD0", "Read:0x15", "Read:0x0A", "Read:0x91", "Read:0x91", "Read:0x44", "Read:0xFE",
  "Read:0x7F", "Read:0x7F", "Write:0xAA", "Read:0xD1", "Read:0x44", "Read:0xFE", "Read:0x7F", "Read:0xAA",
  "Read:0xD0", "Read:0x0E", "Read:0xF0", "Read:0xE9", "Read:0x20", "Read:0x20", "Read:0xE6",
];

function MarkerChip({ children }) {
  return (
    <span className="flex h-[20px] w-[27px] items-center justify-center rounded-[3px] border border-black bg-linear-to-b from-[#303030] to-[#4a4a4a] text-[14px] leading-[18px] tracking-[-0.2px]">
      {children}
    </span>
  );
}

function SidePanel() {
  return (
    <div className="relative flex grow flex-col border-t border-b border-l border-black bg-[#2f2f2f] pl-[6px] text-[#f0f0f0]">
      <div className="mt-[6px]"><Head title="Measurements"><Gear className="h-[17px] w-[17px]" /></Head></div>
      <div className="mt-[7px] h-[95px] pl-[7px] text-[14px] leading-[22px] tracking-[-0.1px]">
        {["Width:", "Period:", "DutyCycle:", "Frequency:"].map((k) => (
          <div key={k} className="flex">
            <span className="w-[117px]">{k}</span>
            <span className="text-[13px] tracking-[1.200px]">###</span>
          </div>
        ))}
      </div>
      <div className="h-[2px] bg-[#565a5e]" />
      <div className="mt-[7px] mb-[14px]"><Head title="Pulse Measurements"><Plus /></Head></div>
      <div className="h-[2px] bg-[#565a5e]" />
      <div className="mt-[7px]"><Head title="Timing Marker Pairs"><Plus /></Head></div>
      <div className="relative mt-[9px] flex h-[22px] items-center pl-[6px] text-[14px]">
        <Tri />
        <span className="ml-[5px] w-[7px]">|</span>
        <MarkerChip>A1</MarkerChip>
        <span className="w-[7px] text-center">-</span>
        <MarkerChip>A2</MarkerChip>
        <span className="ml-[2px] w-[6px]">|</span>
        <span className="w-[9px]">=</span>
        <span className="leading-5">2.1317ms</span>
        <svg width="9" height="14" className="ml-auto block"><path d="M.5 0h8v7l-3 2v4.500h-2v-4.500l-3-2z" fill="#e4e4e4" /></svg>
        <div className="mr-[9px] ml-[12px]"><Cross /></div>
        <div className="absolute top-[-4px] left-[101px] h-[30px] w-[76px] rounded-[10px] border-2 border-[#ffd400]" />
      </div>
      <div className="mt-px pl-[23px] text-[14px] leading-5 tracking-[-0.15px]">
        <div>A1 @ 5.801327s</div>
        <div>A2 @ 5.8034587s</div>
      </div>
      <div className="mt-[8px] h-[2px] bg-[#565a5e]" />
      <div className="mt-[7px]"><Head title="Analyzers"><Plus /></Head></div>
      <div className="mt-[3px] flex h-[22px] items-center pl-5">
        <span className="grow text-[13px] tracking-[-0.2px]">Parallel 8080</span>
        <Gear className="h-[17px] w-[17px]" hole="#2f2f2f" />
        <div className="mr-[9px] ml-[7px]"><Cross /></div>
      </div>
      <div className="mt-[5px] h-[2px] bg-[#565a5e]" />
      <div className="mt-[7px]"><Head title="Decoded Results"><Gear className="h-[17px] w-[17px]" /></Head></div>
      <div className="mt-[7px] ml-[5px] flex h-[30px] w-[276px] items-center rounded-full bg-[#1f1e23] pr-[10px] pl-[14px]">
        <svg width="13" height="13" className="block" fill="none" stroke="#e4e4e4">
          <circle cx="5" cy="5" r="4" strokeWidth="1.900" />
          <path d="M8 8l4 4" strokeWidth="2.400" />
        </svg>
        <span className="ml-2 grow text-[14px] tracking-[-0.4px] text-[#8c8c8c]">Search</span>
        <span className="mb-px text-[14px]">2420485</span>
      </div>
      <div className="mt-[7px] h-[506px] overflow-hidden bg-[#1f1e23]">
        {RESULTS.map((r, i) => (
          <div key={i} className="flex h-[22px] items-start">
            <span className={"grow pl-[3px] text-[13px] leading-[16px] tracking-[-0.6px] " + (i === 15 ? "bg-[#1d2a39]" : "")}>{r}</span>
          </div>
        ))}
      </div>
      <div className="absolute top-[769px] right-0 h-3 w-[10px] rounded-full bg-[#050505]" />
      <svg width="14" height="20" className="absolute top-[746px] left-[158px]">
        <path d="M1 1v15.500l3.600-3.200 2.400 5.200 2.200-1-2.300-5h4.600z" fill="#fff" stroke="#111" strokeWidth=".8" />
      </svg>
    </div>
  );
}

export default function App() {
  return (
    <div className="flex h-[1030px] w-[1911px] flex-col overflow-hidden bg-[#575a5d] font-['Noto_Sans',sans-serif]">
      <div className="flex h-[29px] shrink-0 items-center bg-white pl-[2px] text-black">
        <svg width="20" height="16" viewBox="0 0 20 16" className="block shrink-0">
          <ellipse cx="8.500" cy="8" rx="8.500" ry="7.600" fill="#f04a14" />
          <path d="M16.500 2.500q3 5.500 0 11" fill="none" stroke="#f04a14" strokeWidth="1.600" />
          <path d="M0 4.800h10.500q4 0 4 3.200t-4 3.200h-5v-4" fill="none" stroke="#fff" strokeWidth="1.900" />
          <path d="M9.700 5v6" stroke="#fff" strokeWidth="1.500" />
        </svg>
        <span className="mb-[2px] ml-[5px] text-[15px] leading-[27px] tracking-[-0.460px] whitespace-nowrap">C:/Users/dawid.buchwald/Desktop/300khz.kvdat - KingstVIS</span>
        <svg width="130" height="14" className="mr-[16px] ml-auto block" fill="none" stroke="#000" shapeRendering="crispEdges">
          <path d="M0 6.500h12" />
          <path d="M58.500 3.500h9v9h-9zM60.500 3v-1.500h9v9h-2" />
          <path d="M117.500 1.500l11 11M128.500 1.500l-11 11" shapeRendering="auto" />
        </svg>
      </div>
      <Toolbar />
      <div className="flex h-[939px] pl-[2px]">
        <Analyzer />
        <SidePanel />
      </div>
    </div>
  );
}
